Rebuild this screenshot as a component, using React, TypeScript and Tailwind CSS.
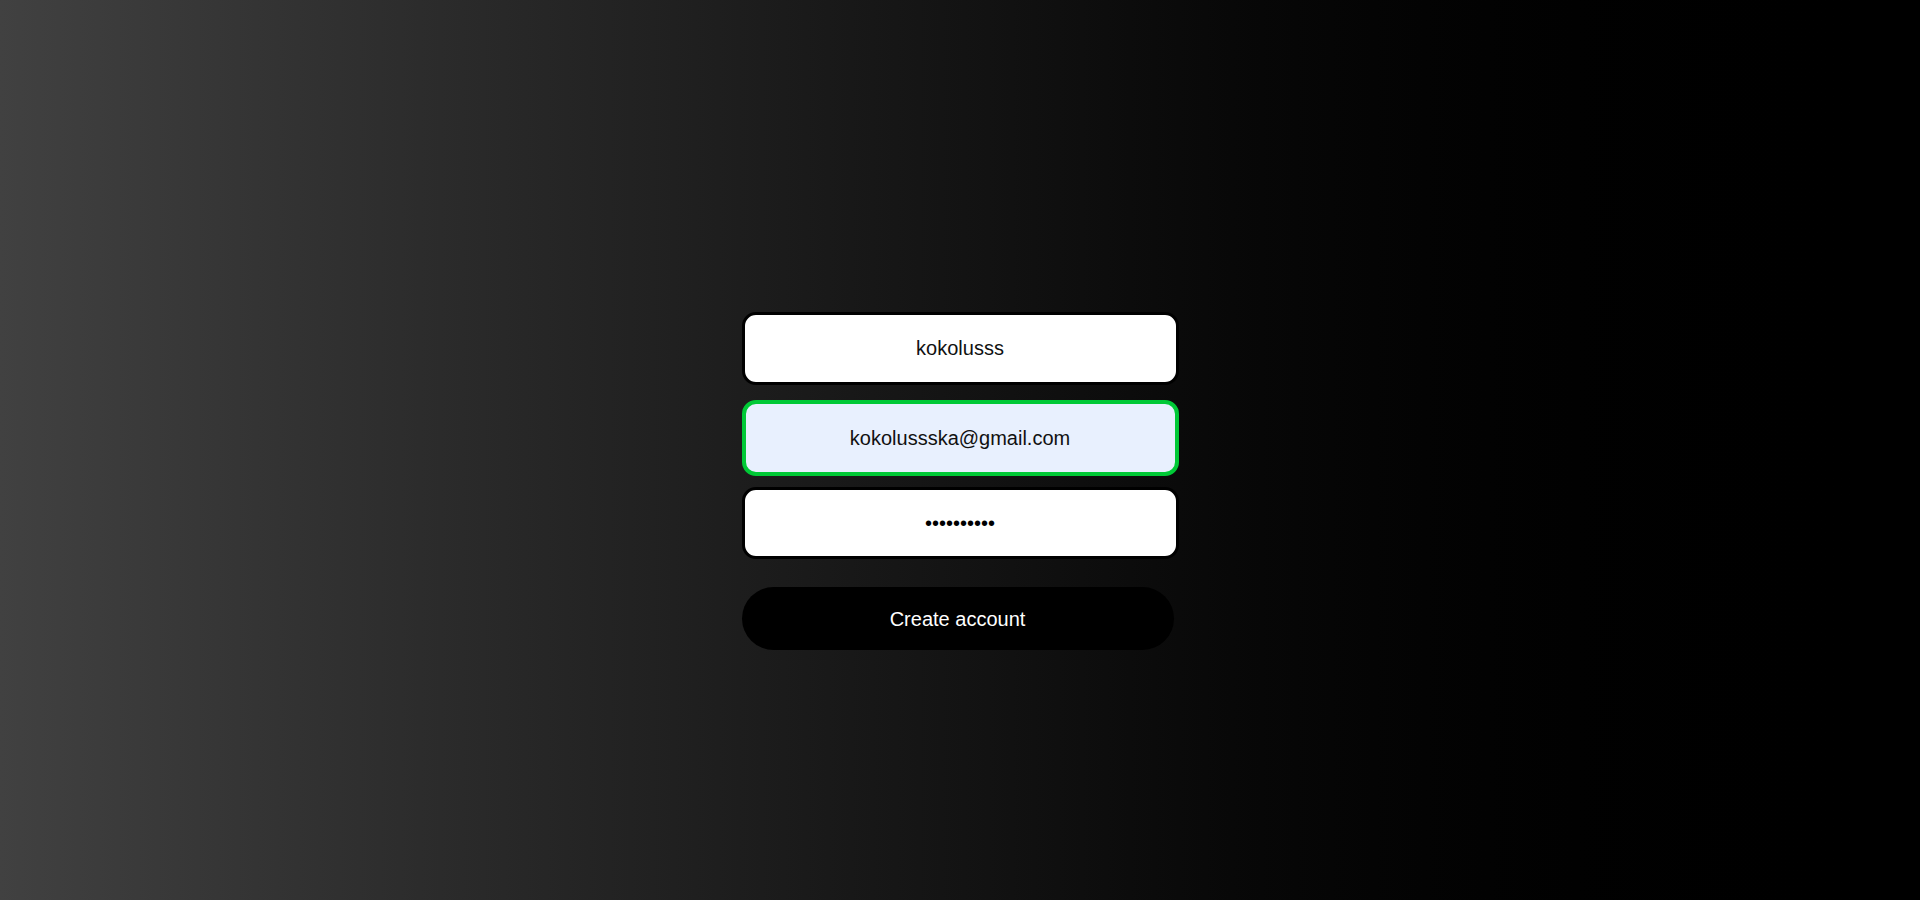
import { useState } from "react";

export default function App() {
  const [name, setName] = useState("kokolusss");
  const [email, setEmail] = useState("kokolussska@gmail.com");
  const [password, setPassword] = useState("kokolusss1");

  return (
    <div className="min-h-[900px] w-full bg-linear-to-r from-[#414141] to-black font-['Liberation_Sans',Arial,sans-serif]">
      <form
        onSubmit={(e) => e.preventDefault()}
        className="mx-auto flex w-[437px] flex-col pt-[312px]"
      >
        <input
          type="text"
          value={name}
          onChange={(e) => setName(e.target.value)}
          className="h-[73px] w-full rounded-[14px] border-[3px] border-black bg-white text-center text-[20px] text-[#111] outline-none"
        />
        <input
          type="email"
          value={email}
          onChange={(e) => setEmail(e.target.value)}
          className="mt-[15px] h-[76px] w-full rounded-[14px] border-[4px] border-[#00c936] bg-[#e8f0fe] text-center text-[20px] text-[#111] outline-none"
        />
        <input
          type="password"
          value={password}
          onChange={(e) => setPassword(e.target.value)}
          className="mt-[11px] h-[72px] w-full rounded-[14px] border-[3px] border-black bg-white text-center text-[20px] text-black outline-none"
        />
        <button
          type="submit"
          className="mt-[28px] h-[63px] w-[432px] rounded-full bg-black text-[20px] text-white"
        >
          Create account
        </button>
      </form>
    </div>
  );
}
